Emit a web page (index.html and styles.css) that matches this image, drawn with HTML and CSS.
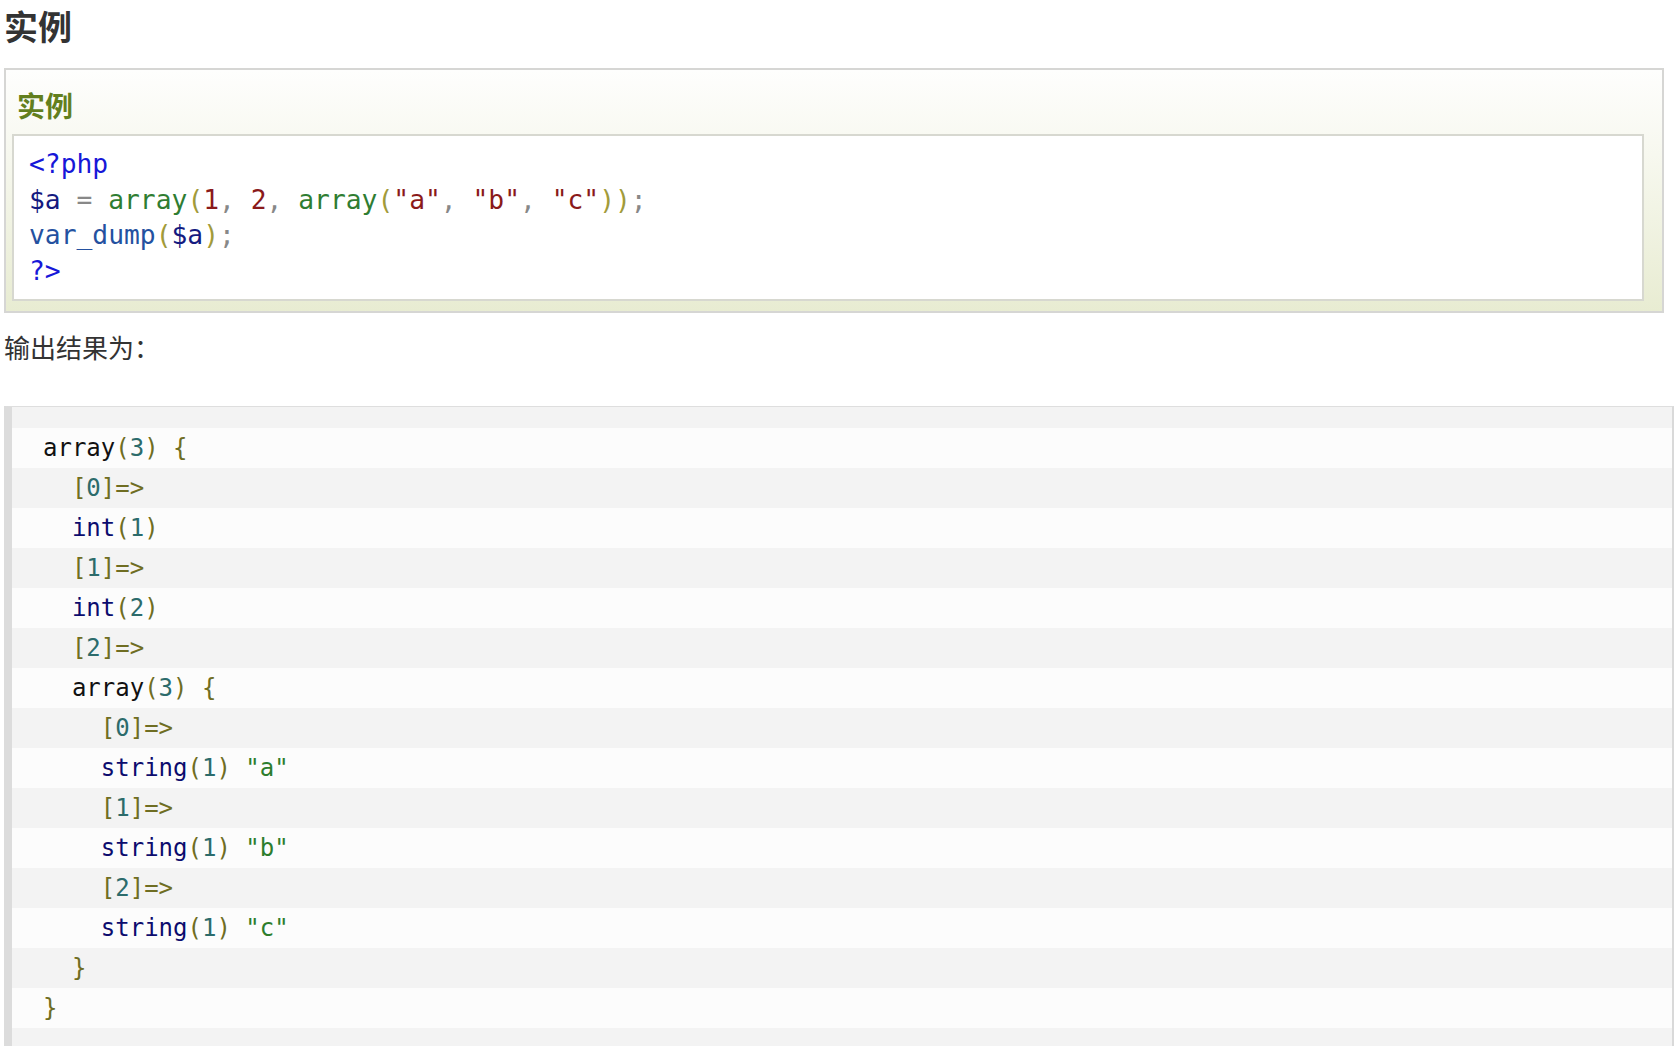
FILE: index.html
```html
<!DOCTYPE html>
<html lang="zh-CN">
<head>
<meta charset="utf-8">
<title>实例</title>
<link rel="stylesheet" href="styles.css">
</head>
<body>
<h2 class="page-title">实例</h2>
<div class="example">
  <h2 class="example-title">实例</h2>
  <div class="example-code"><pre class="src"><span class="k">&lt;?php</span>
<span class="v">$a</span> <span class="p">=</span> <span class="f">array</span><span class="b">(</span><span class="n">1</span><span class="p">,</span> <span class="n">2</span><span class="p">,</span> <span class="f">array</span><span class="b">(</span><span class="n">"a"</span><span class="p">,</span> <span class="n">"b"</span><span class="p">,</span> <span class="n">"c"</span><span class="b">))</span><span class="p">;</span>
<span class="fn">var_dump</span><span class="b">(</span><span class="v">$a</span><span class="b">)</span><span class="p">;</span>
<span class="k">?&gt;</span></pre></div>
</div>
<p class="note">输出结果为：</p>
<div class="output">
  <ol class="rows">
    <li><span class="t">array</span><span class="o">(</span><span class="d">3</span><span class="o">)</span> <span class="o">{</span></li>
    <li>  <span class="o">[</span><span class="d">0</span><span class="o">]=&gt;</span></li>
    <li>  <span class="ty">int</span><span class="o">(</span><span class="d">1</span><span class="o">)</span></li>
    <li>  <span class="o">[</span><span class="d">1</span><span class="o">]=&gt;</span></li>
    <li>  <span class="ty">int</span><span class="o">(</span><span class="d">2</span><span class="o">)</span></li>
    <li>  <span class="o">[</span><span class="d">2</span><span class="o">]=&gt;</span></li>
    <li>  <span class="t">array</span><span class="o">(</span><span class="d">3</span><span class="o">)</span> <span class="o">{</span></li>
    <li>    <span class="o">[</span><span class="d">0</span><span class="o">]=&gt;</span></li>
    <li>    <span class="ty">string</span><span class="o">(</span><span class="d">1</span><span class="o">)</span> <span class="s">"a"</span></li>
    <li>    <span class="o">[</span><span class="d">1</span><span class="o">]=&gt;</span></li>
    <li>    <span class="ty">string</span><span class="o">(</span><span class="d">1</span><span class="o">)</span> <span class="s">"b"</span></li>
    <li>    <span class="o">[</span><span class="d">2</span><span class="o">]=&gt;</span></li>
    <li>    <span class="ty">string</span><span class="o">(</span><span class="d">1</span><span class="o">)</span> <span class="s">"c"</span></li>
    <li>  <span class="o">}</span></li>
    <li><span class="o">}</span></li>
  </ol>
</div>
</body>
</html>
```

FILE: styles.css
```css
html, body {
  margin: 0;
  padding: 0;
  background: #fff;
}
body {
  padding: 0 2px 0 4px;
  font-family: "Noto Sans CJK SC", "Noto Sans", sans-serif;
  color: #333;
  overflow: hidden;
}
.page-title {
  margin: 0;
  padding-top: 2px;
  font-size: 34px;
  line-height: 48px;
  font-weight: bold;
  color: #333;
}
.example {
  margin-top: 18px;
  width: 1660px;
  box-sizing: border-box;
  border: 2px solid #d6d6d4;
  background: linear-gradient(to bottom, #fefefd 0%, #f7f8ef 35%, #e8ecd2 100%);
  padding: 0 18px 10px 6px;
}
.example-title {
  margin: 0;
  padding: 10px 0 4px 5px;
  font-size: 28px;
  line-height: 50px;
  font-weight: bold;
  color: #627f1e;
}
.example-code {
  background: #fff;
  border: 2px solid #d7d8d0;
  padding: 11px 12px 10px 15px;
}
.src {
  margin: 0;
  font-family: "DejaVu Sans Mono", monospace;
  font-size: 26.3px;
  line-height: 35.5px;
  color: #333;
}
.k { color: #1717d8; }
.v { color: #141a80; }
.p { color: #888; }
.f { color: #2f7d32; }
.b { color: #a29b3a; }
.n { color: #8a1a1a; }
.fn { color: #2451a0; }

.note {
  margin: 16px 0 0 0;
  font-size: 26px;
  line-height: 36px;
  color: #333;
}
.output {
  margin-top: 41px;
  width: 1670px;
  box-sizing: border-box;
  border-top: 1px solid #dedede;
  border-right: 2px solid #d9d9d9;
  border-left: 8px solid #dcdcdc;
  background: #f3f3f3;
  padding: 21px 0 20px 0;
}
.rows {
  margin: 0;
  padding: 0;
  list-style: none;
  font-family: "DejaVu Sans Mono", monospace;
  font-size: 24px;
  color: #111;
}
.rows li {
  height: 40px;
  line-height: 40px;
  white-space: pre;
  padding-left: 31px;
}
.rows li:nth-child(odd) {
  background: #fcfcfc;
}
.t { color: #111; }
.o { color: #6f6d22; }
.d { color: #2c6b6b; }
.ty { color: #0c0c6e; }
.s { color: #2d7d2d; }
```
